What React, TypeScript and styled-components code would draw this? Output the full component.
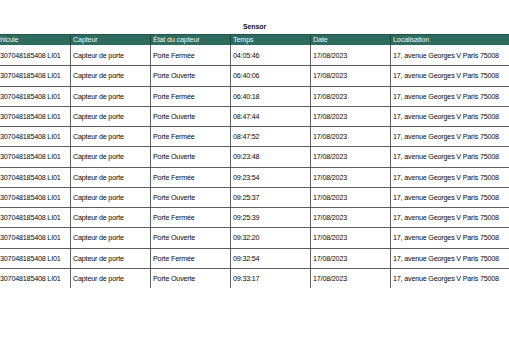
import * as React from 'react';
import styled, {createGlobalStyle} from 'styled-components';

const GlobalStyle = createGlobalStyle`
	html, body {
		margin: 0;
		padding: 0;
		background: #ffffff;
		overflow: hidden;
	}
	body {
		font-family: "Liberation Sans", Arial, sans-serif;
	}
`;

const COLUMNS = '81px 80px 80px 80px 80px 130px';

const Page = styled.div`
	width: 509px;
	height: 340px;
	overflow: hidden;
	padding-top: 21px;
	box-sizing: border-box;
`;

const Title = styled.div`
	text-align: center;
	font-weight: bold;
	font-size: 7px;
	letter-spacing: -0.1px;
	color: #111;
	height: 13px;
	line-height: 11px;
`;

const Sheet = styled.div`
	margin-left: -10px;
	width: 531px;
`;

const HeaderRow = styled.div`
	display: grid;
	grid-template-columns: ${COLUMNS};
	height: 11px;
	background: #2e6c5f;
	border-top: 1px solid #23544a;
	box-sizing: border-box;
`;

const HeaderCell = styled.div`
	color: #eef5f2;
	font-size: 7.2px;
	letter-spacing: -0.15px;
	line-height: 10px;
	padding-left: 2px;
	border-right: 1px solid #1d4038;
	white-space: nowrap;
	overflow: hidden;
`;

const Row = styled.div<{first: boolean}>`
	display: grid;
	grid-template-columns: ${COLUMNS};
	height: 20.25px;
	box-sizing: border-box;
	border-top: ${(props) => (props.first ? 'none' : '1.5px solid #5e5e5e')};
`;

const Cell = styled.div<{indent?: number}>`
	font-size: 7.2px;
	letter-spacing: -0.2px;
	color: #0a0a0a;
	display: flex;
	align-items: center;
	padding-left: ${(props) => props.indent ?? 2}px;
	border-right: 1.5px solid #666666;
	white-space: nowrap;
	overflow: hidden;
`;

const headers = ['Véhicule', 'Capteur', 'État du capteur', 'Temps', 'Date', 'Localisation'];

const rows = [
	['Porte Fermée', '04:05:46'],
	['Porte Ouverte', '06:40:06'],
	['Porte Fermée', '06:40:18'],
	['Porte Ouverte', '08:47:44'],
	['Porte Fermée', '08:47:52'],
	['Porte Ouverte', '09:23:48'],
	['Porte Fermée', '09:23:54'],
	['Porte Ouverte', '09:25:37'],
	['Porte Fermée', '09:25:39'],
	['Porte Ouverte', '09:32:20'],
	['Porte Fermée', '09:32:54'],
	['Porte Ouverte', '09:33:17'],
];

const App = () => {
	return (
		<Page>
			<GlobalStyle />
			<Title>Sensor</Title>
			<Sheet>
				<HeaderRow>
					{headers.map((h) => (
						<HeaderCell key={h}>{h}</HeaderCell>
					))}
				</HeaderRow>
				{rows.map((r, i) => (
					<Row key={i} first={i === 0}>
						<Cell indent={10}>307048185408 LI01</Cell>
						<Cell>Capteur de porte</Cell>
						<Cell>{r[0]}</Cell>
						<Cell>{r[1]}</Cell>
						<Cell>17/08/2023</Cell>
						<Cell>17, avenue Georges V Paris 75008</Cell>
					</Row>
				))}
			</Sheet>
		</Page>
	);
};

export default App;
